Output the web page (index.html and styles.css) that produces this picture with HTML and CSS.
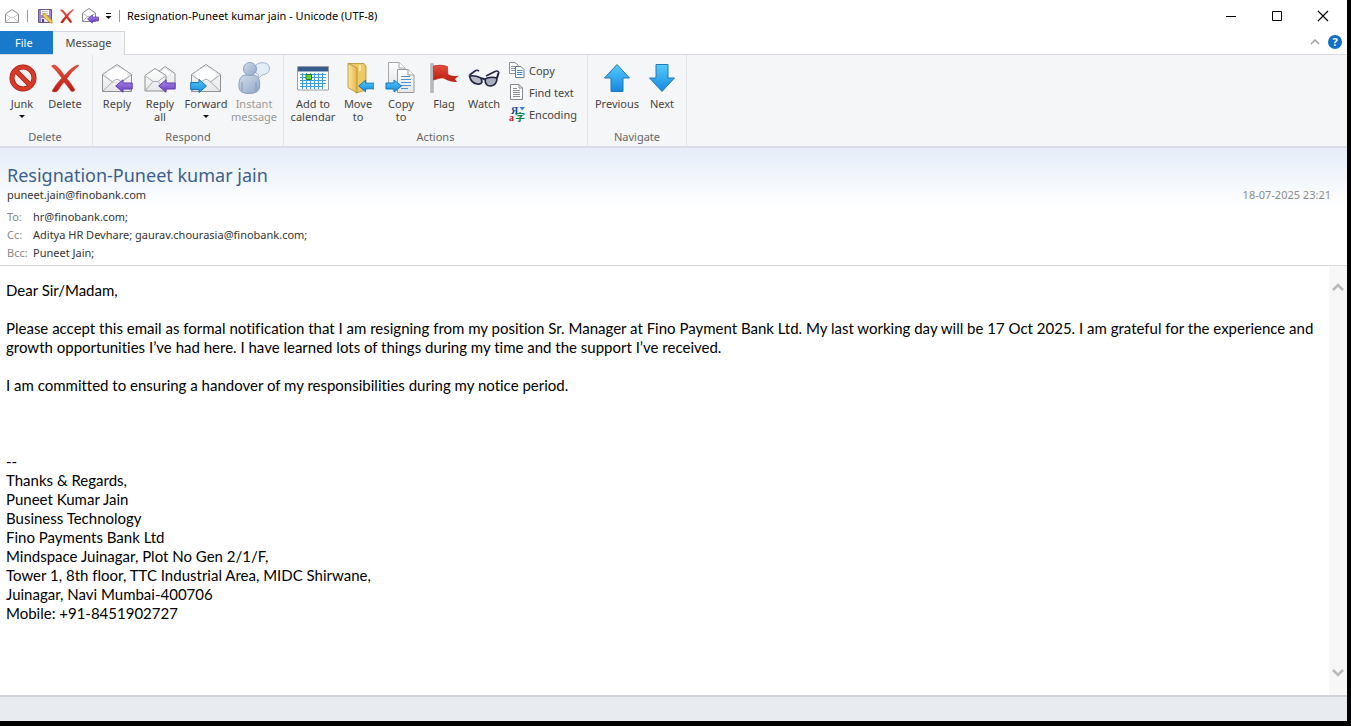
FILE: index.html
```
<!DOCTYPE html>
<html lang="en">
<head>
    <meta charset="UTF-8">
    <meta name="viewport" content="width=device-width, initial-scale=1.0">
    <title>Resignation-Puneet kumar jain - Unicode (UTF-8)</title>
    <link rel="stylesheet" href="styles.css">
</head>
<body>
    <!-- shared icon parts -->
    <svg class="defs" width="0" height="0" aria-hidden="true">
        <defs>
            <linearGradient id="blue" x1="0" y1="0" x2="0" y2="1">
                <stop offset="0" stop-color="#56cbfb"/>
                <stop offset="1" stop-color="#1488e0"/>
            </linearGradient>
            <linearGradient id="purple" x1="0" y1="0" x2="0" y2="1">
                <stop offset="0" stop-color="#a98be8"/>
                <stop offset="1" stop-color="#6a3cc0"/>
            </linearGradient>
            <linearGradient id="red" x1="0" y1="0" x2="0" y2="1">
                <stop offset="0" stop-color="#e8503f"/>
                <stop offset="1" stop-color="#b91d12"/>
            </linearGradient>
            <linearGradient id="person" x1="0" y1="0" x2="1" y2="1">
                <stop offset="0" stop-color="#d3deec"/>
                <stop offset="1" stop-color="#8fa6c4"/>
            </linearGradient>
            <linearGradient id="folder" x1="0" y1="0" x2="1" y2="0">
                <stop offset="0" stop-color="#fbe9a0"/>
                <stop offset="1" stop-color="#e3b546"/>
            </linearGradient>
            <linearGradient id="paper" x1="0" y1="0" x2="0" y2="1">
                <stop offset="0" stop-color="#ffffff"/>
                <stop offset="1" stop-color="#e6e7e9"/>
            </linearGradient>
            <symbol id="envelope" viewBox="0 0 32 32">
                <path d="M1.5 12.500L16 2.500L30.500 12.500V29.500H1.500Z" fill="url(#paper)" stroke="#8f9194"/>
                <path d="M5 14.500V10.500L16 4L27 10.500V14.500L20 20H12Z" fill="#fff" stroke="#d0d2d4" stroke-width=".7"/>
                <path d="M2 13L12 20.500M30 13L20 20.500M2 29L13 18.500Q16 16 19 18.500L30 29" fill="none" stroke="#a9abae"/>
            </symbol>
            <symbol id="arrow-left" viewBox="0 0 18 14">
                <path d="M.7 7L8 .8V4H17.200V10H8V13.200Z"/>
            </symbol>
            <symbol id="cross" viewBox="0 0 32 32">
                <path d="M2.500 4Q5 2 7.500 4Q12 8 15.500 13.500Q21 6.500 28 3L30 3.500Q23 9 17.800 16.500Q22 21 26 28Q24 30.500 22 29Q18.500 24 15 20Q11 25 8.500 29Q5.500 31 3 29Q7 22 12.800 16Q8 9 2.500 4Z" fill="url(#red)" stroke="#c0281c" stroke-width=".5"/>
            </symbol>
        </defs>
    </svg>

    <div class="window">
        <header class="title-bar">
            <svg class="app-icon" width="16" height="16" viewBox="0 0 16 16">
                <path d="M1.500 6L8 1.500L14.500 6V14.500H1.500Z" fill="#fff" stroke="#8f9194"/>
                <path d="M2 6.500L6.500 9.500H9.500L14 6.500M2 14L6.500 9.500M9.500 9.500L14 14" fill="none" stroke="#b4b6b9" stroke-width=".8"/>
            </svg>
            <span class="divider"></span>
            <div class="quick-bar">
                <button type="button" aria-label="Save">
                    <svg width="16" height="16" viewBox="0 0 16 16">
                        <path d="M1.500 1.500H14.500V14.500H1.500Z" fill="#9d86cc" stroke="#6a5599"/>
                        <path d="M4 2H12V7H4Z" fill="#fff"/>
                        <path d="M5 3.500H11M5 5.500H11" stroke="#aaa" stroke-width=".8"/>
                        <path d="M4 10H11V14H4Z" fill="#e4e1ee"/>
                        <path d="M5 11H7V14H5Z" fill="#52417d"/>
                        <path d="M6 6L8 5.500L15 12.500L15.300 15.300L12.500 14.500L6 8Z" fill="#f3cb4d" stroke="#a77c23" stroke-width=".6"/>
                    </svg>
                </button>
                <button type="button" aria-label="Delete">
                    <svg width="16" height="16"><use href="#cross"/></svg>
                </button>
                <button type="button" aria-label="Reply">
                    <svg width="18" height="17" viewBox="0 0 18 17">
                        <path d="M1.500 6L8 1.500L14.500 6V14.500H1.500Z" fill="#fff" stroke="#85878a"/>
                        <path d="M2 6.500L6.500 9.500M9.500 9.500L14 6.500M2 14L6.500 9.500H9.500" fill="none" stroke="#a9abae" stroke-width=".8"/>
                        <use href="#arrow-left" x="6" y="7" width="12" height="10" fill="url(#purple)" stroke="#5a2fae"/>
                    </svg>
                </button>
                <button type="button" aria-label="Customize toolbar">
                    <svg width="7" height="8" viewBox="0 0 7 8"><path d="M1 1.500H6" stroke="#111"/><path d="M.5 4H6.500L3.500 7Z" fill="#111"/></svg>
                </button>
            </div>
            <span class="divider"></span>
            <h1 class="window-title">Resignation-Puneet kumar jain - Unicode (UTF-8)</h1>
            <div class="window-controls">
                <button type="button" aria-label="Minimize">
                    <svg width="12" height="12" viewBox="0 0 12 12"><path d="M1 6.500H11" stroke="#000"/></svg>
                </button>
                <button type="button" aria-label="Maximize">
                    <svg width="12" height="12" viewBox="0 0 12 12"><path d="M1.500 1.500H10.500V10.500H1.500Z" fill="none" stroke="#000"/></svg>
                </button>
                <button type="button" aria-label="Close">
                    <svg width="12" height="12" viewBox="0 0 12 12"><path d="M1 1L11 11M11 1L1 11" stroke="#000" stroke-width="1.100"/></svg>
                </button>
            </div>
        </header>

        <nav class="tabs">
            <button type="button" class="tab tab-file">File</button>
            <button type="button" class="tab tab-active">Message</button>
            <div class="tab-tools">
                <button type="button" aria-label="Collapse ribbon">
                    <svg width="10" height="6" viewBox="0 0 10 6"><path d="M1 5L5 1L9 5" fill="none" stroke="#999" stroke-width="1.300"/></svg>
                </button>
                <button type="button" class="help" aria-label="Help">?</button>
            </div>
        </nav>

        <section class="ribbon">
            <div class="group">
                <div class="group-items">
                    <button type="button" class="tool narrow">
                        <svg width="32" height="32" viewBox="0 0 32 32">
                            <circle cx="17" cy="16" r="11" fill="#f4eeee" stroke="#a9190f" stroke-width="5"/>
                            <path d="M9 8L25 24" stroke="#a9190f" stroke-width="5"/>
                            <circle cx="17" cy="16" r="11" fill="none" stroke="#d63a2b" stroke-width="3.600"/>
                            <path d="M9 8L25 24" stroke="#d63a2b" stroke-width="3.600"/>
                        </svg>
                        <span>Junk</span>
                        <i class="caret"></i>
                    </button>
                    <button type="button" class="tool medium">
                        <svg width="32" height="32"><use href="#cross"/></svg>
                        <span>Delete</span>
                    </button>
                </div>
                <div class="group-name">Delete</div>
            </div>

            <div class="group">
                <div class="group-items">
                    <button type="button" class="tool narrow">
                        <svg width="32" height="32" viewBox="0 0 32 32">
                            <use href="#envelope" width="32" height="32"/>
                            <use href="#arrow-left" x="14" y="17" width="18" height="14" fill="url(#purple)" stroke="#6238b5"/>
                        </svg>
                        <span>Reply</span>
                    </button>
                    <button type="button" class="tool medium two-line">
                        <svg width="32" height="32" viewBox="0 0 32 32">
                            <path d="M11.500 12L21 4.500L31 11.500V24H11.500Z" fill="url(#paper)" stroke="#8f9194"/>
                            <path d="M14 11L21 6L28 11L22 16Z" fill="#fff" stroke="#d0d2d4" stroke-width=".7"/>
                            <path d="M1 13.500L11 6.500L22 13.500V29H1Z" fill="url(#paper)" stroke="#8f9194"/>
                            <path d="M1.500 14L9 19.500H14L21.500 14M1.500 28.500L9 19.500M14 19.500L21.500 28.500" fill="none" stroke="#a9abae"/>
                            <use href="#arrow-left" x="14" y="17" width="18" height="14" fill="url(#purple)" stroke="#6238b5"/>
                        </svg>
                        <span>Reply all</span>
                    </button>
                    <button type="button" class="tool medium">
                        <svg width="32" height="32" viewBox="0 0 32 32">
                            <use href="#envelope" width="32" height="32"/>
                            <path d="M.7 20.500H9V17.500L16.500 24L9 30.500V27.500H.7Z" fill="url(#blue)" stroke="#1374bd"/>
                        </svg>
                        <span>Forward</span>
                        <i class="caret"></i>
                    </button>
                    <button type="button" class="tool wide" disabled>
                        <svg width="32" height="32" viewBox="0 0 32 32">
                            <path d="M17 5Q18 .7 25 .7Q31.500 1 31.500 7Q31 12 24 13L20 17L20.500 12.500Q16 11 17 5Z" fill="#e4ecf6" stroke="#a3b6cf"/>
                            <path d="M1 26Q0 14 7 13H16Q23 14 21.500 26Q20 31.500 11 31.500Q2 31.500 1 26Z" fill="url(#person)" stroke="#8ba1bf"/>
                            <path d="M4 20V29M18 20V29" stroke="#8199b9" fill="none"/>
                            <circle cx="12" cy="7" r="6.500" fill="url(#person)" stroke="#8ba1bf"/>
                        </svg>
                        <span>Instant message</span>
                    </button>
                </div>
                <div class="group-name">Respond</div>
            </div>

            <div class="group">
                <div class="group-items">
                    <button type="button" class="tool wide">
                        <svg width="32" height="32" viewBox="0 0 32 32">
                            <path d="M.5 4.500H31.500V28H.5Z" fill="#fff" stroke="#9a9ea5"/>
                            <path d="M1 5H31V9.500H1Z" fill="#365b8e"/>
                            <path d="M3 12.500H29M3 15.500H29M3 18.500H29M3 21.500H29M3 24.500H26M5.500 11V27M9.500 11V27M13.500 11V27M17.500 11V27M21.500 11V27M25.500 11V27" stroke="#3e9fe0" fill="none"/>
                            <path d="M9 12.500H14.500V17.500H9Z" fill="#61d836" stroke="#237c1c"/>
                        </svg>
                        <span>Add to calendar</span>
                    </button>
                    <button type="button" class="tool narrow">
                        <svg width="32" height="32" viewBox="0 0 32 32">
                            <path d="M6 1.500H22L24 4V28L14 31Z" fill="#edca67" stroke="#b48b2f" stroke-width=".8"/>
                            <path d="M6 1.500L15 6V31L6 25.500Z" fill="url(#folder)" stroke="#b48b2f" stroke-width=".8"/>
                            <path d="M18 3V9" stroke="#fff6cc" stroke-width="1.500"/>
                            <use href="#arrow-left" x="16" y="17" width="17" height="14" fill="url(#blue)" stroke="#1374bd"/>
                        </svg>
                        <span>Move to</span>
                    </button>
                    <button type="button" class="tool medium two-line">
                        <svg width="32" height="32" viewBox="0 0 32 32">
                            <path d="M3.500.5H14L20 6V24H3.500Z" fill="url(#paper)" stroke="#a5a8ac"/>
                            <path d="M14 .5V6H20" fill="#fff" stroke="#a5a8ac"/>
                            <path d="M12.500 7.500H23L29 13V30.500H12.500Z" fill="url(#paper)" stroke="#96999d"/>
                            <path d="M23 7.500V13H29" fill="#fff" stroke="#96999d"/>
                            <path d="M16 14.500H25M16 17.500H26M16 20.500H26M16 23.500H26M16 26.500H23" stroke="#4b92d2" fill="none"/>
                            <path d="M1 21H9V18L16.500 24L9 30V27H1Z" fill="url(#blue)" stroke="#1374bd"/>
                        </svg>
                        <span>Copy to</span>
                    </button>
                    <button type="button" class="tool narrow">
                        <svg width="32" height="32" viewBox="0 0 32 32">
                            <path d="M4 1.500V31" stroke="#8c8f94" stroke-width="3"/>
                            <path d="M4 2V31" stroke="#dfe1e4"/>
                            <path d="M5.500 4Q12 2 19.500 4.500L20 16Q13 15 5.500 18Z" fill="url(#red)" stroke="#a8231a" stroke-width=".6"/>
                            <path d="M19.500 12Q24 15 31 13.500L27 17L29 20Q22 20.500 15 16L20 16Z" fill="#c3271c"/>
                        </svg>
                        <span>Flag</span>
                    </button>
                    <button type="button" class="tool narrow">
                        <svg width="32" height="32" viewBox="0 0 32 32">
                            <path d="M1.500 13L7 9Q9 7.500 11 9M18 14L27 9.500Q30 8 31 11" fill="none" stroke="#27274f" stroke-width="1.600"/>
                            <path d="M1.500 14Q7 13 13 16L14 20Q13 22.500 9 22Q3 21 1.500 14Z" fill="#b6bac7" stroke="#202047" stroke-width="1.600"/>
                            <path d="M17 17Q22 14 29 16Q29 23 23 24Q17 24.500 17 17Z" fill="#a8adbd" stroke="#202047" stroke-width="1.600"/>
                            <path d="M13 17Q15 15.500 17 18M29 16L30.500 11" fill="none" stroke="#202047" stroke-width="2"/>
                        </svg>
                        <span>Watch</span>
                    </button>
                    <div class="small-tools">
                        <button type="button">
                            <svg width="16" height="16" viewBox="0 0 16 16">
                                <path d="M.5.500H6L9 3V11.500H.5Z" fill="#fff" stroke="#8a8d92"/>
                                <path d="M2 4.500H6M2 6.500H6M2 8.500H6" stroke="#8c98a8"/>
                                <path d="M6.500 4.500H12L15 7.500V15.500H6.500Z" fill="#fff" stroke="#65788f"/>
                                <path d="M8 8.500H13.500M8 10.500H13.500M8 12.500H13.500" stroke="#3f86c9"/>
                            </svg>
                            <span>Copy</span>
                        </button>
                        <button type="button">
                            <svg width="16" height="16" viewBox="0 0 16 16">
                                <path d="M1.500.500H10L13.500 4V15.500H1.500Z" fill="#fff" stroke="#85888c"/>
                                <path d="M10 .5V4H13.500" fill="none" stroke="#85888c"/>
                                <path d="M4 4.500H8M4 6.500H11M4 8.500H11M4 10.500H11M4 12.500H11" stroke="#8a9098"/>
                            </svg>
                            <span>Find text</span>
                        </button>
                        <button type="button">
                            <svg width="16" height="16" viewBox="0 0 16 16">
                                <text x="2" y="8" class="glyph" fill="#24478f">Я</text>
                                <text x="0" y="15" class="glyph" fill="#c92222">a</text>
                                <text x="6" y="15" class="glyph" fill="#148044">字</text>
                                <path d="M10.500 1H16L13.200 4.500Z" fill="#3b7ed0"/>
                            </svg>
                            <span>Encoding</span>
                        </button>
                    </div>
                </div>
                <div class="group-name">Actions</div>
            </div>

            <div class="group">
                <div class="group-items">
                    <button type="button" class="tool wide">
                        <svg width="32" height="32" viewBox="0 0 32 32">
                            <path d="M16 2.500L28.500 16H22V29.500H10V16H3.500Z" fill="url(#blue)" stroke="#2079b8"/>
                        </svg>
                        <span>Previous</span>
                    </button>
                    <button type="button" class="tool narrow">
                        <svg width="32" height="32" viewBox="0 0 32 32">
                            <path d="M16 29.500L28.500 16H22V2.500H10V16H3.500Z" fill="url(#blue)" stroke="#2079b8"/>
                        </svg>
                        <span>Next</span>
                    </button>
                </div>
                <div class="group-name">Navigate</div>
            </div>
        </section>

        <section class="mail-header">
            <h2 class="subject">Resignation-Puneet kumar jain</h2>
            <div class="sender">
                <span>puneet.jain@finobank.com</span>
                <time datetime="2025-07-18T23:21">18-07-2025 23:21</time>
            </div>
            <dl class="recipients">
                <dt>To:</dt><dd>hr@finobank.com;</dd>
                <dt>Cc:</dt><dd>Aditya HR Devhare; gaurav.chourasia@finobank.com;</dd>
                <dt>Bcc:</dt><dd>Puneet Jain;</dd>
            </dl>
        </section>

        <main class="mail-body">
            <article class="message">
                <p>Dear Sir/Madam,</p>
                <p>Please accept this email as formal notification that I am resigning from my position Sr. Manager at Fino Payment Bank Ltd. My last working day will be 17 Oct 2025. I am grateful for the experience and growth opportunities I’ve had here. I have learned lots of things during my time and the support I’ve received.</p>
                <p>I am committed to ensuring a handover of my responsibilities during my notice period.</p>
                <address class="signature">
                    --<br>
                    Thanks &amp; Regards,<br>
                    Puneet Kumar Jain<br>
                    Business Technology<br>
                    Fino Payments Bank Ltd<br>
                    Mindspace Juinagar, Plot No Gen 2/1/F,<br>
                    Tower 1, 8th floor, TTC Industrial Area, MIDC Shirwane,<br>
                    Juinagar, Navi Mumbai-400706<br>
                    Mobile: +91-8451902727
                </address>
            </article>
            <div class="scrollbar">
                <button type="button" aria-label="Scroll up">
                    <svg width="12" height="10" viewBox="0 0 12 10"><path d="M1 8L6 3L11 8" fill="none" stroke="#b9b9b9" stroke-width="2.500"/></svg>
                </button>
                <button type="button" aria-label="Scroll down">
                    <svg width="12" height="10" viewBox="0 0 12 10"><path d="M1 2L6 7L11 2" fill="none" stroke="#b9b9b9" stroke-width="2.500"/></svg>
                </button>
            </div>
        </main>

        <footer class="status-bar"></footer>
    </div>
</body>
</html>
```
FILE: styles.css
```
* {
    margin: 0;
    padding: 0;
    box-sizing: border-box;
}

body {
    font-family: "Noto Sans", "Open Sans", sans-serif;
    font-size: 11px;
    color: #444;
    background: #000;
}

button {
    font: inherit;
    color: inherit;
    background: none;
    border: none;
}

svg {
    display: block;
    flex: none;
}

.defs {
    position: absolute;
}

.window {
    display: flex;
    flex-direction: column;
    min-height: calc(100vh - 5px);
    margin-right: 4px;
    background: #fff;
}

/* title bar */
.title-bar {
    display: flex;
    align-items: center;
    height: 31px;
    padding-left: 4px;
}

.divider {
    width: 1px;
    height: 12px;
    margin: 0 7px;
    background: #999;
}

.quick-bar {
    display: flex;
    align-items: center;
    gap: 6px;
    padding-left: 2px;
}

.window-title {
    font-size: 11px;
    font-weight: normal;
    color: #000;
}

.window-controls {
    display: flex;
    margin-left: auto;
    padding-right: 1px;
}

.window-controls button {
    display: flex;
    justify-content: center;
    width: 46px;
}

/* tabs */
.tabs {
    display: flex;
    height: 24px;
    border-bottom: 1px solid #d5d9de;
}

.tab {
    padding: 0 13px 2px;
}

.tab-file {
    padding: 0 20px 1px 15px;
    color: #fff;
    background: #1979ca;
}

.tab-active {
    height: 24px;
    background: #f5f6f7;
    border: 1px solid #d5d9de;
    border-width: 1px 1px 0 0;
}

.tab-tools {
    display: flex;
    align-items: center;
    gap: 8px;
    margin-left: auto;
    padding: 0 5px 1px 0;
}

.help {
    width: 14px;
    height: 14px;
    line-height: 14px;
    font-weight: bold;
    color: #fff;
    background: #0f6fca;
    border-radius: 50%;
}

/* ribbon */
.ribbon {
    display: flex;
    height: 93px;
    background: #f5f6f7;
    border-bottom: 2px solid #d9dee4;
}

.group {
    display: flex;
    flex-direction: column;
    justify-content: space-between;
    padding: 7px 4px 2px;
    border-right: 1px solid #e2e4e7;
}

.group:first-child {
    padding-left: 2px;
}

.group-items {
    display: flex;
}

.group-name {
    line-height: 15px;
    text-align: center;
    color: #666;
}

.tool {
    display: flex;
    flex-direction: column;
    align-items: center;
    line-height: 13px;
}

.tool span {
    margin-top: 3px;
}

.tool:disabled {
    color: #999;
}

.narrow {
    width: 40px;
}

.medium {
    width: 46px;
}

.wide {
    width: 50px;
}

.two-line span {
    width: 32px;
}

.caret {
    margin-top: 5px;
    border: 3px solid transparent;
    border-top-color: #111;
    border-bottom: 0;
}

.small-tools {
    display: flex;
    flex-direction: column;
    gap: 6px;
    padding: 0 6px 0 5px;
}

.small-tools button {
    display: flex;
    align-items: center;
    gap: 4px;
    height: 16px;
}

.glyph {
    font-family: "Liberation Serif", "Noto Sans CJK SC", serif;
    font-size: 10px;
    font-weight: bold;
}

/* mail header */
.mail-header {
    padding: 15px 16px 3px 7px;
    line-height: 18px;
    color: #333;
    background: linear-gradient(#e5edf8, #fff 60px);
    border-bottom: 1px solid #d9d9d9;
}

.subject {
    font-size: 18px;
    font-weight: normal;
    line-height: 24px;
    color: #3b5f8c;
}

.sender {
    display: flex;
    justify-content: space-between;
    line-height: 16px;
}

.sender time {
    color: #8c8c8c;
}

.recipients {
    display: grid;
    grid-template-columns: 26px 1fr;
    margin-top: 5px;
}

.recipients dt {
    color: #888;
}

/* mail body */
.mail-body {
    display: flex;
    flex: 1;
}

.message {
    flex: 1;
    padding: 15px 0 16px 6px;
    font-family: Lato, "Open Sans", sans-serif;
    font-size: 15px;
    font-variant-ligatures: none;
    line-height: 19px;
    color: #000;
}

.message p {
    margin-bottom: 19px;
}

.signature {
    margin-top: 57px;
    font-style: normal;
}

.scrollbar {
    display: flex;
    flex-direction: column;
    justify-content: space-between;
    align-items: center;
    width: 18px;
    padding: 16px 0 17px;
    background: #f7f7f7;
}

.status-bar {
    height: 26px;
    background: #e8ecf0;
    border-top: 2px solid #cfd3d7;
}
```
